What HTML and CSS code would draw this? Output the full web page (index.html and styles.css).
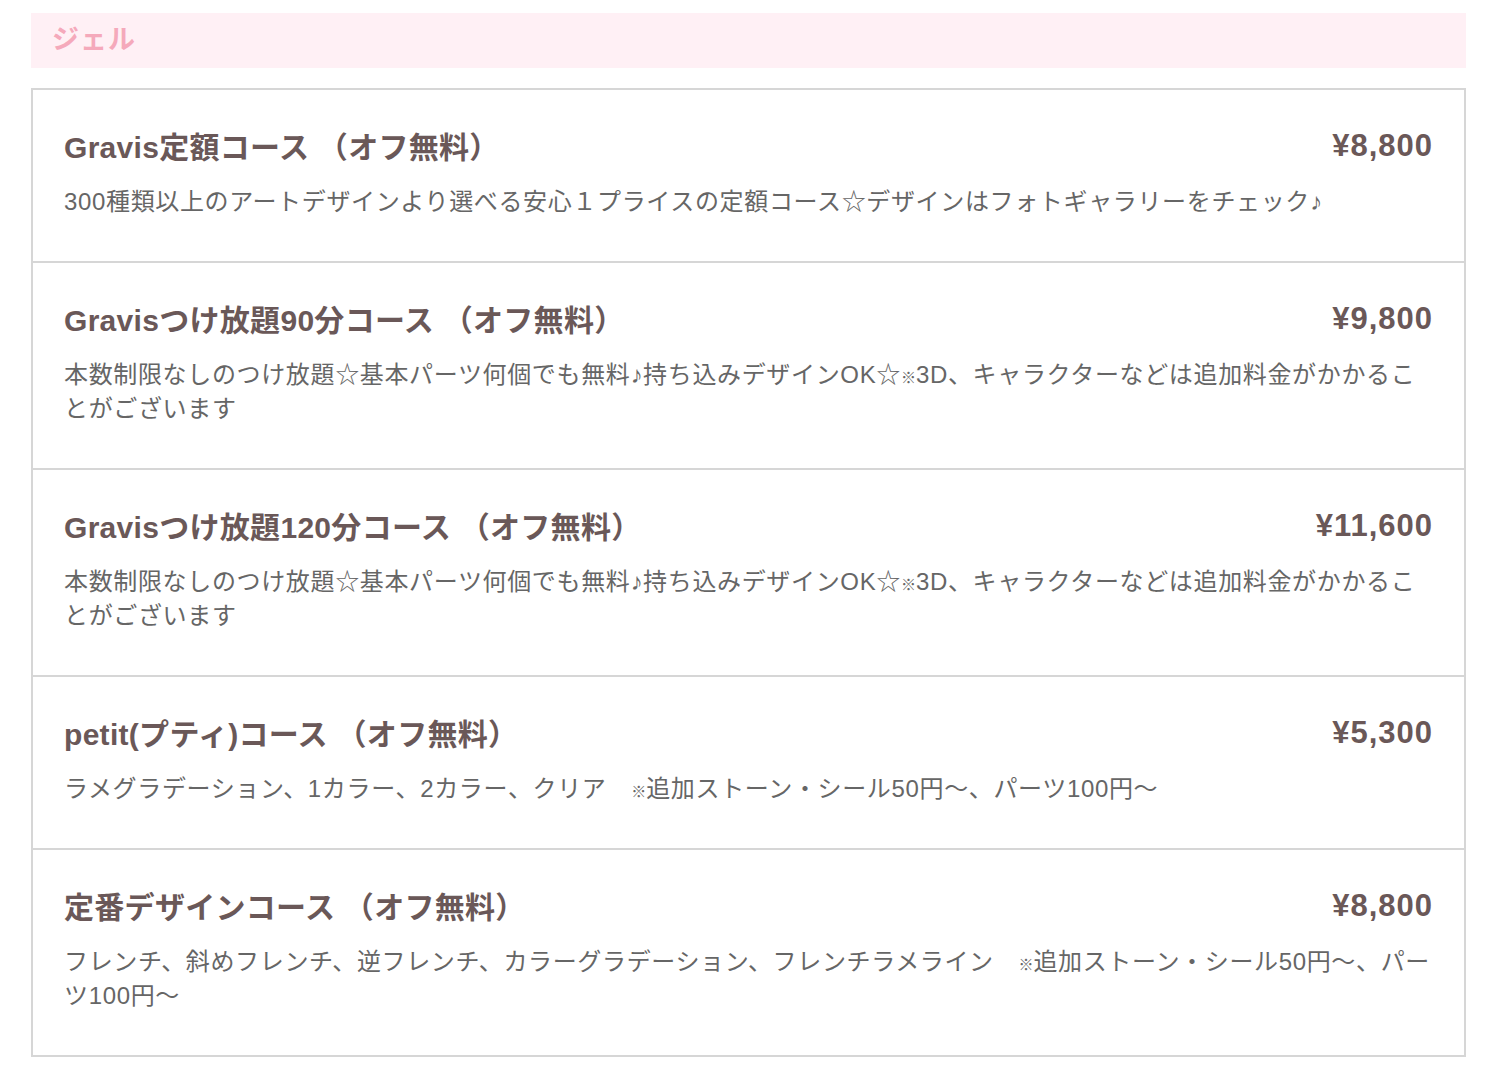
FILE: index.html
```html
<!DOCTYPE html>
<html lang="ja">
<head>
<meta charset="utf-8">
<title>ジェル</title>
<link rel="stylesheet" href="styles.css">
</head>
<body>
<div class="page">
  <h2 class="cat">ジェル</h2>
  <ul class="menu">
    <li class="item">
      <div class="head"><span class="name">Gravis定額コース （オフ無料）</span><span class="price">¥8,800</span></div>
      <p class="desc">300種類以上のアートデザインより選べる安心１プライスの定額コース☆デザインはフォトギャラリーをチェック♪</p>
    </li>
    <li class="item">
      <div class="head"><span class="name">Gravisつけ放題90分コース （オフ無料）</span><span class="price">¥9,800</span></div>
      <p class="desc">本数制限なしのつけ放題☆基本パーツ何個でも無料♪持ち込みデザインOK☆<span class="kome">※</span>3D、キャラクターなどは追加料金がかかることがございます</p>
    </li>
    <li class="item">
      <div class="head"><span class="name">Gravisつけ放題120分コース （オフ無料）</span><span class="price">¥11,600</span></div>
      <p class="desc">本数制限なしのつけ放題☆基本パーツ何個でも無料♪持ち込みデザインOK☆<span class="kome">※</span>3D、キャラクターなどは追加料金がかかることがございます</p>
    </li>
    <li class="item">
      <div class="head"><span class="name">petit(プティ)コース （オフ無料）</span><span class="price">¥5,300</span></div>
      <p class="desc">ラメグラデーション、1カラー、2カラー、クリア　<span class="kome">※</span>追加ストーン・シール50円〜、パーツ100円〜</p>
    </li>
    <li class="item">
      <div class="head"><span class="name">定番デザインコース （オフ無料）</span><span class="price">¥8,800</span></div>
      <p class="desc">フレンチ、斜めフレンチ、逆フレンチ、カラーグラデーション、フレンチラメライン　<span class="kome">※</span>追加ストーン・シール50円〜、パーツ100円〜</p>
    </li>
  </ul>
</div>
</body>
</html>
```
FILE: styles.css
```css
html, body {
  margin: 0;
  padding: 0;
  background: #ffffff;
}
body {
  font-family: "Liberation Sans", "Noto Sans CJK JP", sans-serif;
}
.page {
  padding: 13px 21px 0 31px;
}
.cat {
  margin: 0;
  background: #fff0f5;
  color: #f5a9bb;
  font-size: 27px;
  font-weight: 700;
  line-height: 55px;
  padding: 0 0 0 21px;
  letter-spacing: 1px;
}
.menu {
  list-style: none;
  margin: 20px 0 0 0;
  padding: 0;
  border: 2px solid #d6d6d6;
}
.item {
  padding: 38px 31px 42px 31px;
  border-top: 2px solid #d6d6d6;
}
.item:first-child {
  border-top: none;
}
.head {
  display: flex;
  justify-content: space-between;
  align-items: center;
  height: 40px;
}
.name, .price {
  color: #6a5858;
  font-size: 30px;
  font-weight: 700;
  line-height: 40px;
  letter-spacing: 0.3px;
}
.price {
  position: relative;
  top: -2px;
  font-size: 31px;
  letter-spacing: 1px;
}
.desc {
  margin: 17px 0 0 0;
  color: #666666;
  font-size: 24px;
  line-height: 34px;
  letter-spacing: 0.65px;
  line-break: strict;
}
.kome {
  font-size: 15px;
  line-height: 0;
  letter-spacing: 0;
}
```
